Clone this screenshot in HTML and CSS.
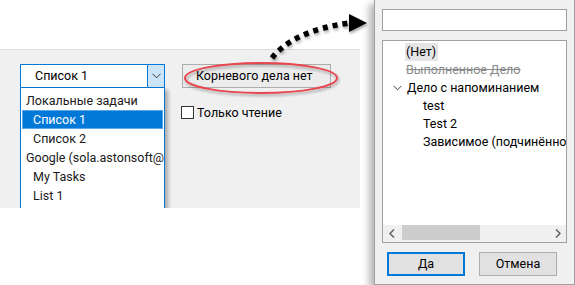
FILE: index.html
```html
<!DOCTYPE html>
<html lang="ru">
<head>
<meta charset="utf-8">
<title>Корневое дело</title>
<link rel="stylesheet" href="styles.css">
</head>
<body>
<div class="screen">
  <div class="host">
    <div class="panel">
      <div class="combo-wrap">
        <div class="combo">
          <span class="combo-text">Список 1</span>
          <span class="combo-btn">
            <svg width="9" height="6" viewBox="0 0 9 6"><path d="M0.5 0.8 L4.5 4.8 L8.5 0.8" fill="none" stroke="#333" stroke-width="1"/></svg>
          </span>
        </div>
        <ul class="droplist">
          <li class="grp">Локальные задачи</li>
          <li class="sub sel">Список 1</li>
          <li class="sub">Список 2</li>
          <li class="grp">Google (sola.astonsoft@gmail.com)</li>
          <li class="sub">My Tasks</li>
          <li class="sub">List 1</li>
        </ul>
      </div>
      <div class="opts">
        <div class="root-btn">Корневого дела нет</div>
        <label class="chk"><span class="box"></span><span>Только чтение</span></label>
      </div>
    </div>
  </div>

  <div class="dialog">
    <div class="search"></div>
    <div class="treebox">
      <div class="tree">
        <div class="row l0"><span class="hl">(Нет)</span></div>
        <div class="row l0"><span class="done">Выполненное Дело</span></div>
        <div class="row l0 open">
          <svg class="twist" width="9" height="6" viewBox="0 0 9 6"><path d="M0.5 0.8 L4.5 4.8 L8.5 0.8" fill="none" stroke="#444" stroke-width="1"/></svg>
          <span>Дело с напоминанием</span>
        </div>
        <div class="row l1"><span>test</span></div>
        <div class="row l1"><span>Test 2</span></div>
        <div class="row l1"><span>Зависимое (подчинённое дело)</span></div>
      </div>
      <div class="hscroll">
        <span class="arr">
          <svg width="6" height="9" viewBox="0 0 6 9"><path d="M5 0.5 L1 4.5 L5 8.5" fill="none" stroke="#606060" stroke-width="1.5"/></svg>
        </span>
        <div class="track"><div class="thumb"></div></div>
        <span class="arr">
          <svg width="6" height="9" viewBox="0 0 6 9"><path d="M1 0.5 L5 4.5 L1 8.5" fill="none" stroke="#606060" stroke-width="1.5"/></svg>
        </span>
      </div>
    </div>
    <div class="btns">
      <div class="btn default">Да</div>
      <div class="btn">Отмена</div>
    </div>
  </div>

  <svg class="annot" width="575" height="285" viewBox="0 0 575 285">
    <defs>
      <filter id="sh" x="-20%" y="-20%" width="140%" height="160%">
        <feGaussianBlur in="SourceAlpha" stdDeviation="1.5"/>
        <feOffset dx="1" dy="2" result="b"/>
        <feComponentTransfer><feFuncA type="linear" slope="0.35"/></feComponentTransfer>
        <feMerge><feMergeNode/><feMergeNode in="SourceGraphic"/></feMerge>
      </filter>
    </defs>
    <ellipse cx="261" cy="78" rx="76" ry="15" fill="none" stroke="#e8474f" stroke-width="2" filter="url(#sh)"/>
    <g filter="url(#sh)">
      <path d="M272 58 Q293 31 349 23" fill="none" stroke="#000" stroke-width="5.5" stroke-dasharray="5 5"/>
      <path d="M349 14 L367 23 L349 32 Z" fill="#000"/>
    </g>
  </svg>
</div>
</body>
</html>
```

FILE: styles.css
```css
* { box-sizing: border-box; }
html, body { margin: 0; padding: 0; background: #fff; }
body {
  font-family: Roboto, "Noto Sans", sans-serif;
  font-size: 12.5px;
  color: #000;
}
.screen {
  position: relative;
  width: 575px;
  height: 285px;
  overflow: hidden;
  display: flex;
  align-items: flex-start;
}
.host {
  width: 360px;
  padding-top: 49px;
  flex: none;
}
.panel {
  height: 159px;
  border-top: 1px solid #dcdcdc;
  background: #f0f0f0;
  padding: 14px 0 0 20px;
  display: flex;
  align-items: flex-start;
  overflow: hidden;
}
.combo-wrap {
  position: relative;
  width: 145px;
  flex: none;
}
.combo {
  height: 24px;
  border: 1px solid #0078d7;
  background: #fff;
  display: flex;
  align-items: stretch;
}
.combo-text {
  flex: 1;
  padding-left: 14px;
  line-height: 22px;
}
.combo-btn {
  width: 17px;
  background: #cce4f7;
  border-left: 1px solid #0078d7;
  display: flex;
  align-items: center;
  justify-content: center;
}
.droplist {
  position: absolute;
  left: 0;
  top: 24px;
  width: 145px;
  height: 140px;
  margin: 0;
  padding: 3px 0 0;
  list-style: none;
  background: #fff;
  border-left: 1px solid #0078d7;
  border-right: 1px solid #0078d7;
  box-shadow: 3px 2px 4px rgba(0,0,0,0.3);
}
.droplist li {
  height: 19px;
  line-height: 19px;
  white-space: nowrap;
  overflow: hidden;
  color: #1a1a1a;
}
.droplist .grp { padding-left: 5px; }
.droplist .sub { padding-left: 12px; }
.droplist .sel {
  background: #0078d7;
  color: #fff;
  margin: 0 1px;
  padding-left: 11px;
  box-shadow: inset 0 0 0 1px #5aa6e6;
}
.opts {
  margin-left: 17px;
  display: flex;
  flex-direction: column;
  align-items: flex-start;
}
.root-btn {
  width: 149px;
  height: 24px;
  border: 1px solid #adadad;
  background: #ececec;
  padding-left: 13px;
  line-height: 22px;
  white-space: nowrap;
}
.chk {
  margin-top: 18px;
  margin-left: -1px;
  display: flex;
  align-items: center;
  height: 13px;
}
.chk .box {
  width: 13px;
  height: 13px;
  border: 1px solid #333;
  background: #fff;
  margin-right: 3px;
}
.dialog {
  margin-left: 14px;
  width: 201px;
  height: 285px;
  flex: none;
  background: #f0f0f0;
  border: 1px solid #a0a0a0;
  border-top: none;
  padding: 9px 7px 0 7px;
  box-shadow: -5px 4px 7px rgba(0,0,0,0.28);
  display: flex;
  flex-direction: column;
}
.search {
  height: 22px;
  background: #fff;
  border: 1px solid #a0a0a0;
}
.treebox {
  margin-top: 9px;
  height: 203px;
  background: #fff;
  border: 1px solid #a0a0a0;
  display: flex;
  flex-direction: column;
}
.tree {
  flex: 1;
  padding-top: 2px;
  overflow: hidden;
}
.row {
  height: 18px;
  line-height: 18px;
  white-space: nowrap;
  display: flex;
  align-items: center;
}
.row.l0 { padding-left: 23px; }
.row.l1 { padding-left: 40px; }
.row.open { padding-left: 10px; }
.row .twist { margin-right: 5px; flex: none; }
.hl {
  background: #e5e5e5;
  padding: 0 2px 0 1px;
  margin-left: -1px;
}
.done {
  color: #8a8a8a;
  text-decoration: line-through;
}
.hscroll {
  height: 17px;
  background: #f0f0f0;
  display: flex;
  align-items: stretch;
}
.hscroll .arr {
  width: 17px;
  flex: none;
  display: flex;
  align-items: center;
  justify-content: center;
}
.track {
  flex: 1;
  padding: 0 0 2px 2px;
}
.thumb {
  width: 78px;
  height: 15px;
  background: #cdcdcd;
}
.btns {
  margin-top: 9px;
  padding-left: 5px;
  display: flex;
  gap: 14px;
}
.btn {
  width: 78px;
  height: 24px;
  background: #e1e1e1;
  border: 1px solid #adadad;
  text-align: center;
  line-height: 22px;
}
.btn.default {
  border: 2px solid #0078d7;
  line-height: 20px;
}
.annot {
  position: absolute;
  left: 0;
  top: 0;
  pointer-events: none;
}
```
